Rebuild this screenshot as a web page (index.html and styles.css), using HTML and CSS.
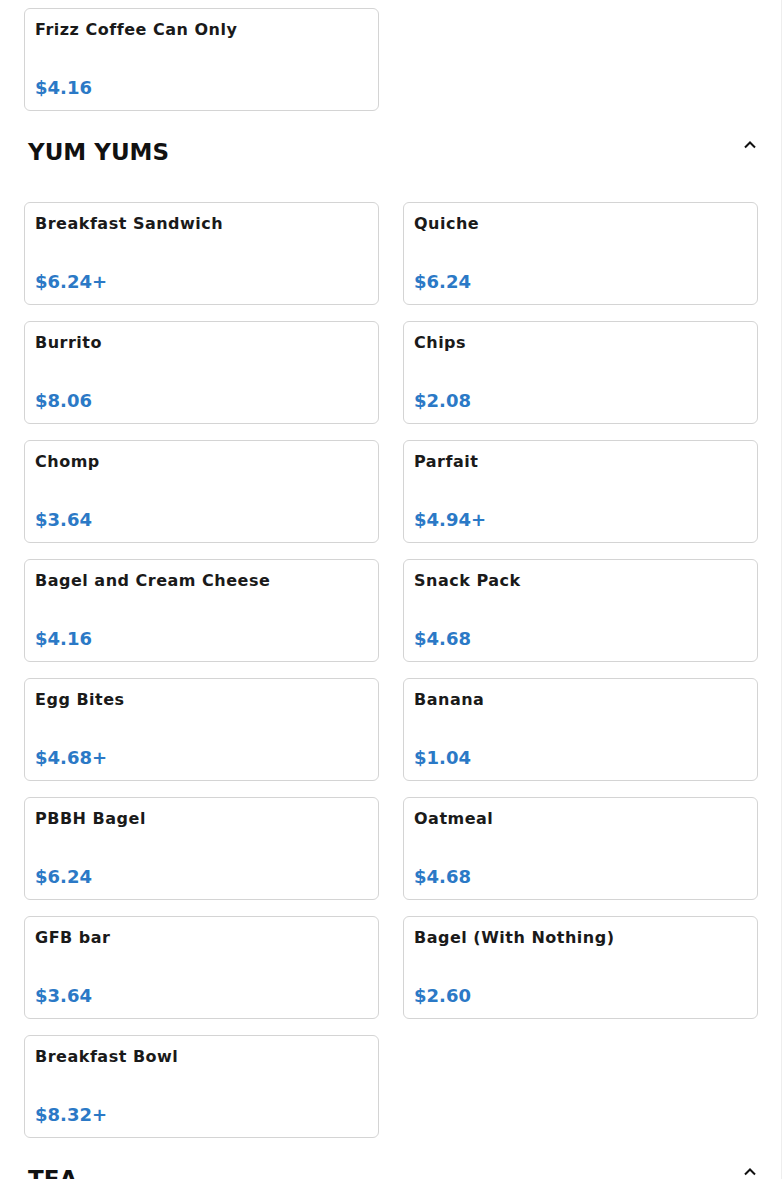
FILE: index.html
```html
<!DOCTYPE html>
<html lang="en">
<head>
<meta charset="utf-8">
<title>Menu</title>
<link rel="stylesheet" href="styles.css">
</head>
<body>
<main class="menu">
  <div class="grid">
    <div class="card"><div class="card-title">Frizz Coffee Can Only</div><div class="card-price">$4.16</div></div>
  </div>

  <section class="section">
    <div class="section-head">
      <h2 class="section-title">YUM YUMS</h2>
      <svg class="chev" width="14" height="10" viewBox="0 0 14 10"><path d="M2 7.5 L7 2.5 L12 7.5" fill="none" stroke="#111" stroke-width="2"/></svg>
    </div>
    <div class="grid">
      <div class="card"><div class="card-title">Breakfast Sandwich</div><div class="card-price">$6.24+</div></div>
      <div class="card"><div class="card-title">Quiche</div><div class="card-price">$6.24</div></div>
      <div class="card"><div class="card-title">Burrito</div><div class="card-price">$8.06</div></div>
      <div class="card"><div class="card-title">Chips</div><div class="card-price">$2.08</div></div>
      <div class="card"><div class="card-title">Chomp</div><div class="card-price">$3.64</div></div>
      <div class="card"><div class="card-title">Parfait</div><div class="card-price">$4.94+</div></div>
      <div class="card"><div class="card-title">Bagel and Cream Cheese</div><div class="card-price">$4.16</div></div>
      <div class="card"><div class="card-title">Snack Pack</div><div class="card-price">$4.68</div></div>
      <div class="card"><div class="card-title">Egg Bites</div><div class="card-price">$4.68+</div></div>
      <div class="card"><div class="card-title">Banana</div><div class="card-price">$1.04</div></div>
      <div class="card"><div class="card-title">PBBH Bagel</div><div class="card-price">$6.24</div></div>
      <div class="card"><div class="card-title">Oatmeal</div><div class="card-price">$4.68</div></div>
      <div class="card"><div class="card-title">GFB bar</div><div class="card-price">$3.64</div></div>
      <div class="card"><div class="card-title">Bagel (With Nothing)</div><div class="card-price">$2.60</div></div>
      <div class="card"><div class="card-title">Breakfast Bowl</div><div class="card-price">$8.32+</div></div>
    </div>
  </section>

  <section class="section">
    <div class="section-head">
      <h2 class="section-title">TEA</h2>
      <svg class="chev" width="14" height="10" viewBox="0 0 14 10"><path d="M2 7.5 L7 2.5 L12 7.5" fill="none" stroke="#111" stroke-width="2"/></svg>
    </div>
  </section>
</main>
</body>
</html>
```

FILE: styles.css
```css
html, body {
  margin: 0;
  padding: 0;
  background: #fff;
  min-height: 100%;
}
body {
  font-family: "DejaVu Sans", "Liberation Sans", sans-serif;
  color: #1c1c1c;
  box-shadow: inset -1px 0 0 #eeeeee;
}
.menu {
  padding: 8px 24px 0 24px;
}
.grid {
  display: grid;
  grid-template-columns: 1fr 1fr;
  column-gap: 24px;
  row-gap: 16px;
}
.card {
  border: 1px solid #d4d4d4;
  border-radius: 6px;
  padding: 11px 10px 12px 10px;
  height: 103px;
  box-sizing: border-box;
  display: flex;
  flex-direction: column;
  justify-content: space-between;
}
.card-title {
  font-size: 16px;
  letter-spacing: 0.5px;
  font-weight: bold;
  line-height: 20px;
  color: #1a1a1a;
}
.card-price {
  font-size: 18px;
  font-weight: bold;
  line-height: 20px;
  color: #2b79c6;
}
.section-head {
  display: flex;
  justify-content: space-between;
  align-items: flex-start;
  padding: 0 1px 0 4px;
  margin: 27px 0 35px 0;
}
.section-title {
  margin: 0;
  font-size: 23px;
  line-height: 29px;
  font-weight: bold;
  color: #111;
}
.chev {
  margin-top: 2px;
}
```
